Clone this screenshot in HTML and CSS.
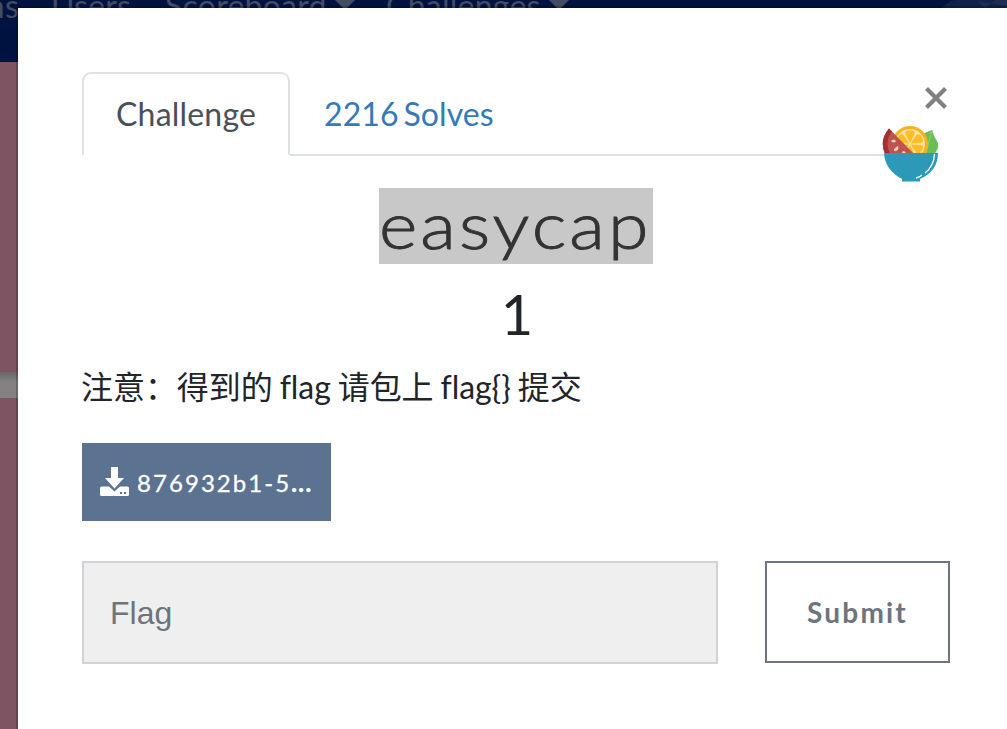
FILE: index.html
```
<!DOCTYPE html>
<html lang="zh-CN">
<head>
<meta charset="utf-8">
<title>easycap</title>
<link rel="stylesheet" href="styles.css">
</head>
<body>
<div class="page">
  <nav class="navbar">
    <span class="nav-item nav-teams">Teams</span>
    <span class="nav-item nav-users">Users</span>
    <span class="nav-item nav-scoreboard">Scoreboard<i class="caret"></i></span>
    <span class="nav-item nav-challenges">Challenges<i class="caret"></i></span>
    <svg class="nav-art" viewBox="0 0 70 8"><path d="M5 8Q10 2 17 0H70V8Z" fill="#10214a"/><path d="M48 8L58 0H70V6L40 1Z" fill="#1c2c52"/></svg>
  </nav>
  <div class="backdrop-body"><div class="band"></div></div>
</div>
<main class="modal">
  <button class="close" aria-label="Close"><svg viewBox="0 0 24 24"><path d="M2.500 2.500L21.500 21.500M21.500 2.500L2.500 21.500" stroke="#808080" stroke-width="4.200"/></svg></button>
  <svg class="bowl" viewBox="0 0 58 60">
    <path d="M40 9L50 5Q52 12 56 18Q57 25 52 29H36Z" fill="#6cbd55"/>
    <path d="M50 5L44 28" stroke="#8fd174" stroke-width="1"/>
    <circle cx="28" cy="19" r="18" fill="#fbb01c"/>
    <circle cx="28" cy="19" r="15" fill="#fee0a0"/>
    <g fill="#fdbd24">
      <path d="M28 18L23.500 9Q23 5 28 5.500Q33 5 32.500 9Z"/>
      <path d="M28 18L23.500 9Q23 5 28 5.500Q33 5 32.500 9Z" transform="rotate(60 28 19)"/>
      <path d="M28 18L23.500 9Q23 5 28 5.500Q33 5 32.500 9Z" transform="rotate(120 28 19)"/>
      <path d="M28 18L23.500 9Q23 5 28 5.500Q33 5 32.500 9Z" transform="rotate(180 28 19)"/>
      <path d="M28 18L23.500 9Q23 5 28 5.500Q33 5 32.500 9Z" transform="rotate(240 28 19)"/>
      <path d="M28 18L23.500 9Q23 5 28 5.500Q33 5 32.500 9Z" transform="rotate(300 28 19)"/>
    </g>
    <path d="M7 3.500L32 29H3Q-3 15 7 3.500Z" fill="#bf5354"/>
    <path d="M7 3.500L10 6.500Q2 17 8 29H3Q-3 15 7 3.500Z" fill="#a52e31"/>
    <path d="M9 16Q12 13 14 16Q12 19 9 16M12 24L16 21Q18 26 12 26ZM20 28Q21 24 24 28Z" fill="#fbd8ae"/>
    <path d="M2 28H56Q56 46 38 54V56.500H20V54Q3 45 2 28Z" fill="#2c99b8"/>
    <path d="M52.500 29Q52 41 43 48M40 50Q38 52 34 53" fill="none" stroke="#fff" stroke-width="1.300"/>
  </svg>
  <div class="tabs">
    <a class="tab active">Challenge</a>
    <a class="tab solves">2216 Solves</a>
  </div>
  <h2 class="name"><span class="selected"><span class="name-text">easycap</span></span></h2>
  <h3 class="value">1</h3>
  <p class="desc">注意：得到的 flag 请包上 flag{} 提交</p>
  <a class="file">
    <svg class="download" viewBox="0 0 29 29"><path d="M11 0H18V11H24L14.500 21.500L5 11H11Z"/><path d="M1.500 19.500H9L14.500 24.500L20 19.500H27.500Q29 19.500 29 21V27.500Q29 29 27.500 29H1.500Q0 29 0 27.500V21Q0 19.500 1.500 19.500Z"/><path class="dots" d="M20 25H22V27H20ZM24 25H26V27H24Z"/></svg>
    <span class="file-name">876932b1-5<span class="dots-text">...</span></span>
  </a>
  <div class="form">
    <input class="flag" type="text" placeholder="Flag">
    <button class="submit">Submit</button>
  </div>
</main>
</body>
</html>
```
FILE: styles.css
```
* { box-sizing: border-box; }
body { margin: 0; width: 1007px; height: 729px; overflow: hidden; position: relative; font-family: Lato, "Noto Sans CJK SC", sans-serif; }
.page { height: 729px; background: #7f5462; }
.navbar { position: relative; height: 62px; background: #001340; color: #444c64; font-size: 32px; line-height: 38px; letter-spacing: .25px; }
.nav-item { position: absolute; top: -13px; white-space: nowrap; }
.nav-teams { right: 988px; }
.nav-users { left: 51px; }
.nav-scoreboard { left: 165px; }
.nav-challenges { left: 386px; }
.caret { display: inline-block; margin-left: 8px; vertical-align: 8px; border: 10px solid transparent; border-top-color: #444c64; border-bottom: 0; }
.nav-art { position: absolute; left: 937px; top: 0; width: 70px; height: 8px; }
.backdrop-body { padding-top: 310px; height: 667px; }
.band { height: 26px; background: linear-gradient(#686868, #828282 10px); }
.modal { position: absolute; left: 18px; top: 8px; width: 996px; height: 730px; padding: 64px 64px 0; background: #fff; box-shadow: 0 0 0 2px rgba(0, 0, 0, .2); color: #212529; }
.close { position: absolute; left: 906px; top: 78px; width: 24px; height: 24px; padding: 0; border: 0; background: none; }
.close svg { display: block; width: 24px; height: 24px; }
.bowl { position: absolute; left: 864px; top: 117px; width: 58px; height: 60px; }
.tabs { display: flex; width: 836px; height: 84px; border-bottom: 2px solid #dee2e6; }
.tab { height: 84px; padding: 20px 32px; border: 2px solid transparent; font-size: 32px; line-height: 40px; letter-spacing: .2px; color: #337ab7; white-space: nowrap; }
.tab.solves { letter-spacing: .1px; word-spacing: -3.500px; }
.tab.active { width: 208px; border-color: #dee2e6 #dee2e6 #fff; border-radius: 9px 9px 0 0; background: #fff; color: #495057; }
.name { display: flex; justify-content: center; margin: 32px 0 0; font-size: 65px; font-weight: 300; line-height: 72px; }
.selected { width: 274px; height: 76px; background: #c8c8c8; color: #333; }
.name-text { display: inline-block; letter-spacing: 2.700px; -webkit-text-stroke: .9px #333; transform: scaleX(1.130); transform-origin: left; white-space: nowrap; }
.value { margin: 16px 0 0; padding-left: 2px; font-size: 56px; font-weight: 400; line-height: 67px; text-align: center; }
.desc { margin: 16px 0 0 -1px; font-size: 32px; line-height: 48px; letter-spacing: -.05px; word-spacing: -1.200px; white-space: nowrap; }
.file { display: flex; align-items: center; width: 249px; height: 78px; margin-top: 32px; padding-left: 18px; background: #5b7290; color: #fff; }
.download { width: 29px; height: 29px; margin-top: -1px; fill: #fff; }
.download .dots { fill: #5b7290; }
.file-name { margin: 2px 0 0 8px; font-size: 24px; line-height: 38px; letter-spacing: 2.050px; -webkit-text-stroke: .3px #fff; white-space: nowrap; }
.dots-text { font-weight: 900; letter-spacing: 1.400px; }
.form { display: flex; justify-content: space-between; margin-top: 40px; }
.flag { width: 636px; height: 103px; padding: 2px 26px 0; border: 2px solid #ced4da; background: #efefef; font: 32px "Liberation Sans", sans-serif; }
.flag::placeholder { color: #6c757d; opacity: 1; }
.submit { width: 185px; height: 102px; padding: 0; border: 2px solid #6c757d; background: #fff; color: #6c757d; font: 700 28px Lato, sans-serif; letter-spacing: 2.200px; }
```
